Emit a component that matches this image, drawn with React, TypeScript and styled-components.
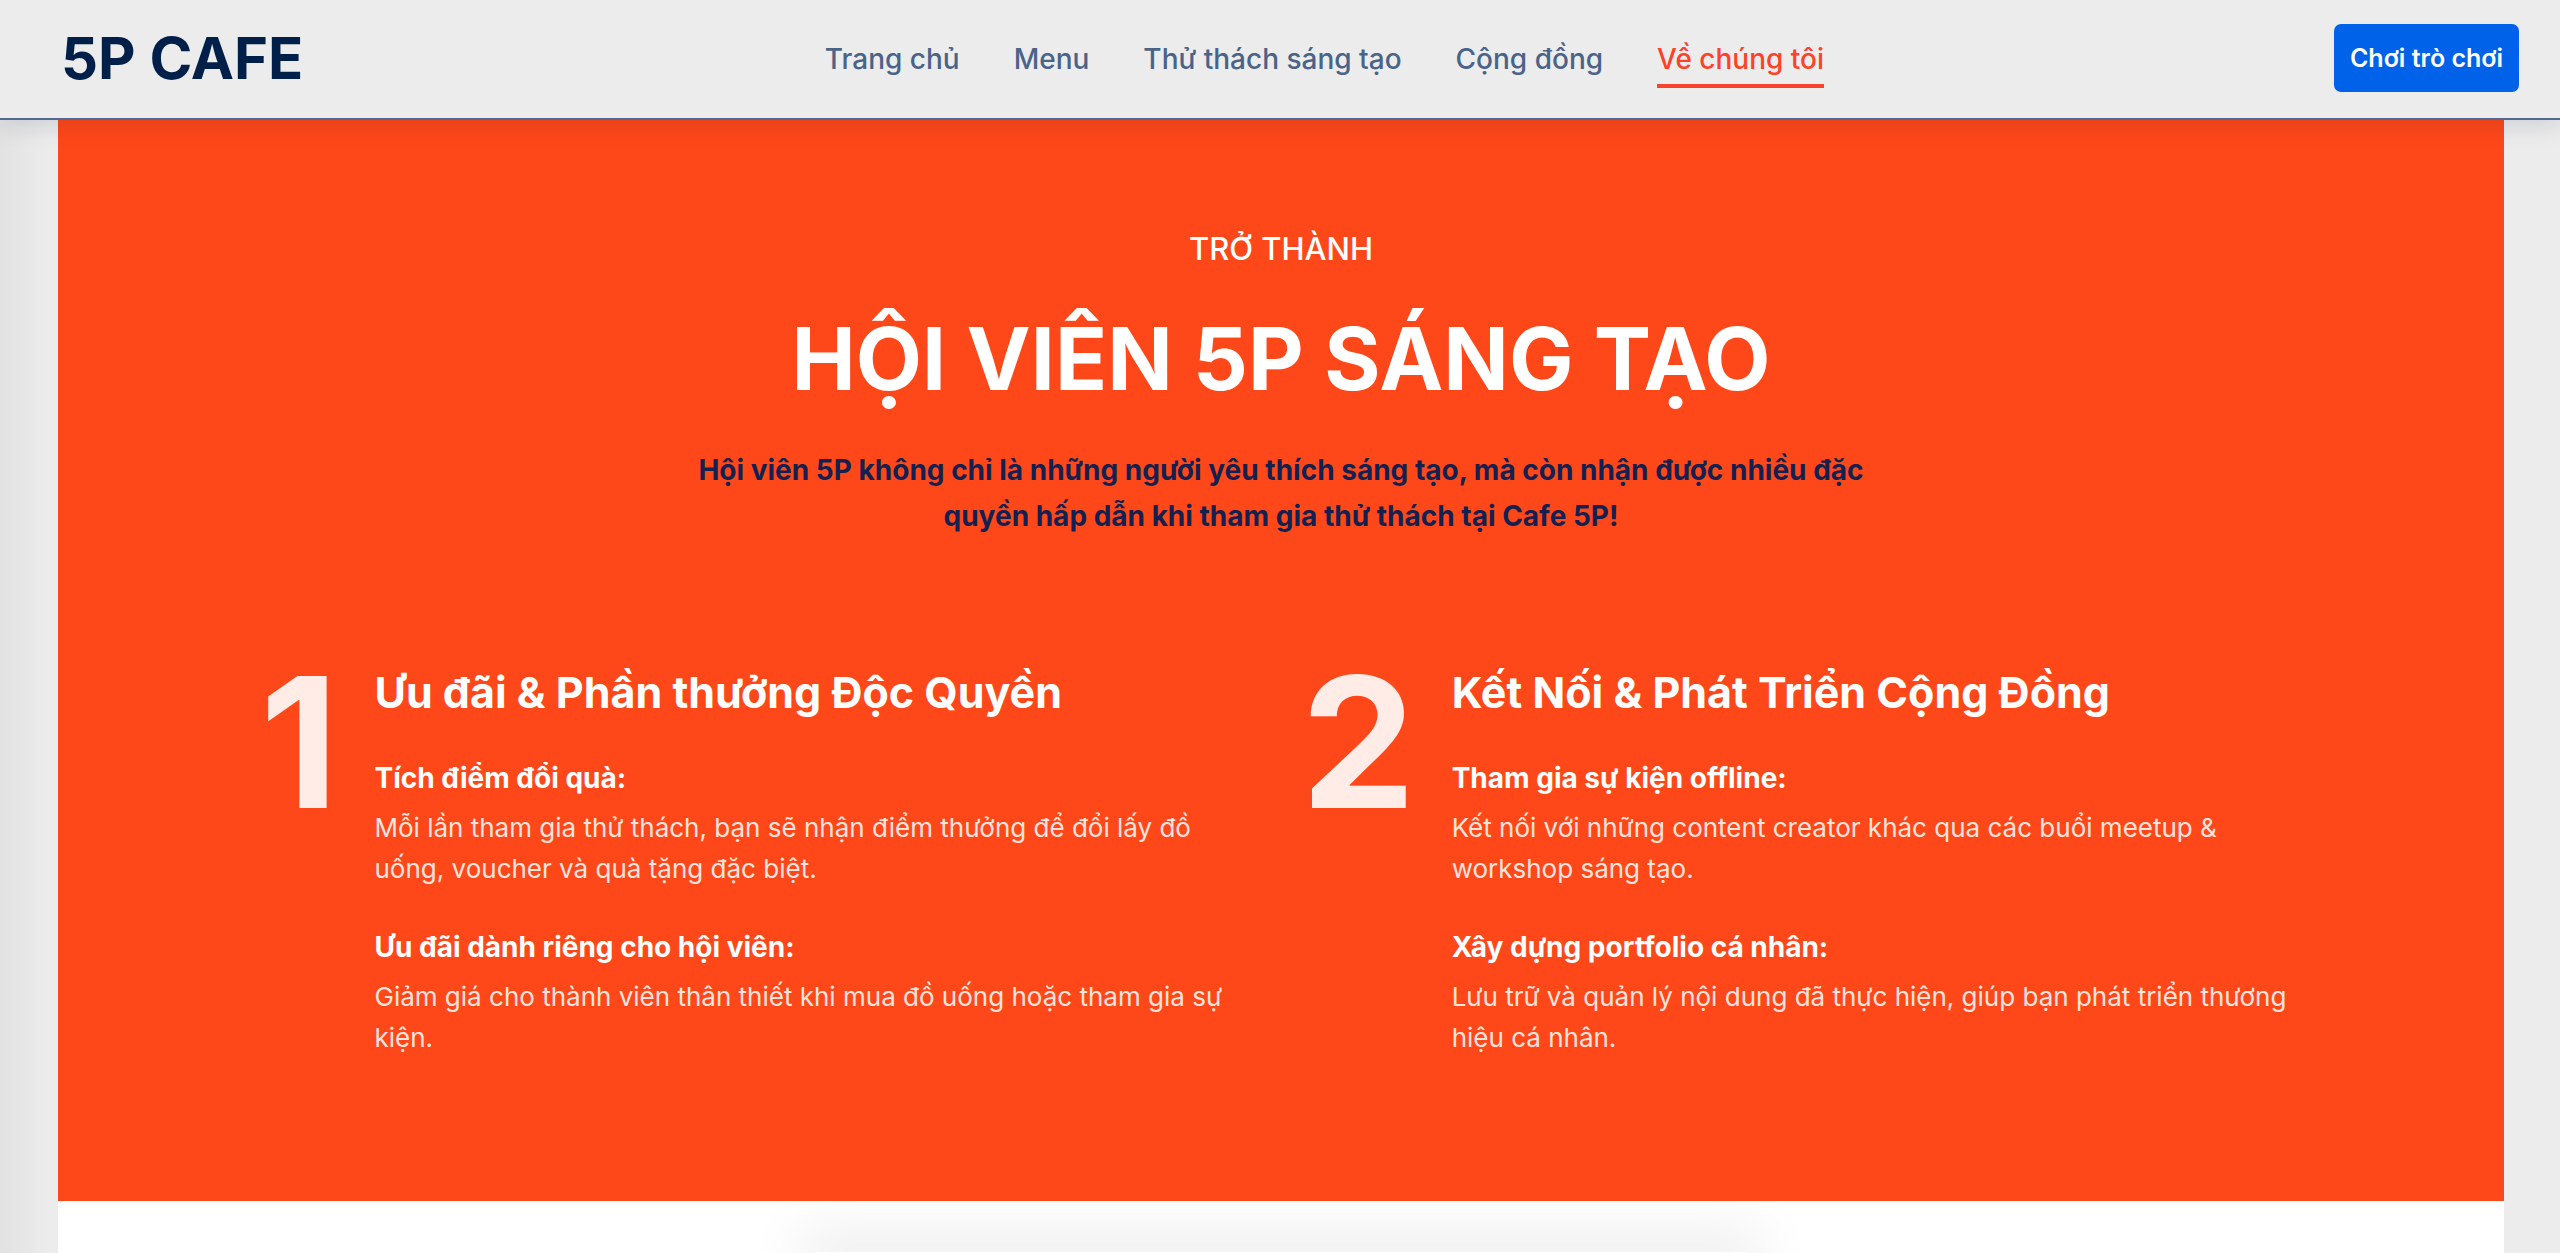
import React from "react";
import styled, { createGlobalStyle } from "styled-components";

const GlobalStyle = createGlobalStyle`
  *, *::before, *::after { box-sizing: border-box; }
  body {
    margin: 0;
    background: #ececec;
    font-family: Inter, "Noto Sans", "Liberation Sans", sans-serif;
  }
  h1, h2, h3, p { margin: 0; }
`;

const Page = styled.div`
  min-height: 100vh;
  display: flex;
  flex-direction: column;
  background: linear-gradient(to right, #e2e2e2, #ececec 48px);
`;

const Header = styled.header`
  position: sticky;
  top: 0;
  z-index: 10;
  display: flex;
  justify-content: space-between;
  align-items: center;
  height: 120px;
  padding: 0 41px 2px 61px;
  background: #ececec;
  border-bottom: 2px solid #53698f;
  box-shadow: 0 4px 24px rgba(0, 20, 60, 0.14);
`;

const Logo = styled.a`
  min-width: 254px;
  color: #00204a;
  font-size: 58px;
  font-weight: 700;
  line-height: 72px;
  text-decoration: none;
`;

const Nav = styled.nav`
  display: flex;
  gap: 54px;
`;

const NavLink = styled.a<{ $active?: boolean }>`
  padding: 12px 0 6px;
  border-bottom: 4px solid ${(p) => (p.$active ? "#f8432a" : "transparent")};
  color: ${(p) => (p.$active ? "#ff4127" : "#4a6388")};
  font-size: 28px;
  font-weight: 500;
  line-height: 38px;
  text-decoration: none;
  white-space: nowrap;
`;

const PlayButton = styled.button`
  height: 68px;
  padding: 0 16px;
  border: 0;
  border-radius: 7px;
  background: #0062e8;
  color: #fff;
  font-family: inherit;
  font-size: 25px;
  font-weight: 600;
  white-space: nowrap;
  cursor: pointer;
`;

const Main = styled.main`
  flex: 1;
  display: flex;
  flex-direction: column;
  margin: 0 56px 0 58px;
  background: #fff;
`;

const Membership = styled.section`
  padding: 105px 202px 143px;
  background: #ff4819;
  color: #fff;
`;

const Intro = styled.div`
  display: flex;
  flex-direction: column;
  align-items: center;
  text-align: center;
`;

const Eyebrow = styled.p`
  font-size: 31px;
  font-weight: 500;
  line-height: 48px;
`;

const Title = styled.h1`
  margin-top: 32px;
  font-size: 86px;
  font-weight: 700;
  line-height: 108px;
`;

const Lead = styled.p`
  max-width: 1220px;
  margin-top: 34px;
  color: #14204f;
  font-size: 28px;
  font-weight: 700;
  line-height: 46px;
`;

const Benefits = styled.div`
  display: grid;
  grid-template-columns: 1fr 1fr;
  gap: 40px;
  margin-top: 109px;
`;

const Benefit = styled.article`
  display: flex;
  align-items: flex-start;
  gap: 36px;
`;

const BenefitNumber = styled.span`
  color: #ffece7;
  font-size: 182px;
  font-weight: 700;
  line-height: 188px;
`;

const BenefitBody = styled.div`
  flex: 1;
  padding-top: 16px;
`;

const BenefitTitle = styled.h2`
  font-size: 43px;
  font-weight: 700;
  line-height: 56px;
`;

const Perk = styled.div`
  margin-top: 38px;
`;

const PerkTitle = styled.h3`
  font-size: 28px;
  font-weight: 700;
  line-height: 41px;
`;

const PerkText = styled.p`
  margin-top: 8px;
  color: #ffe4dd;
  font-size: 26px;
  line-height: 41px;
`;

const NextSection = styled.section`
  flex: 1;
  display: flex;
  flex-direction: column;
  align-items: center;
  padding-top: 51px;
  overflow: hidden;
`;

const Card = styled.div`
  flex: 1;
  width: 38%;
  box-shadow: 0 0 56px 16px rgba(0, 0, 0, 0.1);
`;

const links = ["Trang chủ", "Menu", "Thử thách sáng tạo", "Cộng đồng", "Về chúng tôi"];

const benefits = [
  {
    title: "Ưu đãi & Phần thưởng Độc Quyền",
    perks: [
      {
        title: "Tích điểm đổi quà:",
        text: "Mỗi lần tham gia thử thách, bạn sẽ nhận điểm thưởng để đổi lấy đồ uống, voucher và quà tặng đặc biệt.",
      },
      {
        title: "Ưu đãi dành riêng cho hội viên:",
        text: "Giảm giá cho thành viên thân thiết khi mua đồ uống hoặc tham gia sự kiện.",
      },
    ],
  },
  {
    title: "Kết Nối & Phát Triển Cộng Đồng",
    perks: [
      {
        title: "Tham gia sự kiện offline:",
        text: "Kết nối với những content creator khác qua các buổi meetup & workshop sáng tạo.",
      },
      {
        title: "Xây dựng portfolio cá nhân:",
        text: "Lưu trữ và quản lý nội dung đã thực hiện, giúp bạn phát triển thương hiệu cá nhân.",
      },
    ],
  },
];

export default function App() {
  return (
    <Page>
      <GlobalStyle />
      <Header>
        <Logo href="#">5P CAFE</Logo>
        <Nav>
          {links.map((label, i) => (
            <NavLink key={label} href="#" $active={i === links.length - 1}>
              {label}
            </NavLink>
          ))}
        </Nav>
        <PlayButton type="button">Chơi trò chơi</PlayButton>
      </Header>
      <Main>
        <Membership>
          <Intro>
            <Eyebrow>TRỞ THÀNH</Eyebrow>
            <Title>HỘI VIÊN 5P SÁNG TẠO</Title>
            <Lead>
              Hội viên 5P không chỉ là những người yêu thích sáng tạo, mà còn nhận được nhiều đặc
              quyền hấp dẫn khi tham gia thử thách tại Cafe 5P!
            </Lead>
          </Intro>
          <Benefits>
            {benefits.map((benefit, i) => (
              <Benefit key={benefit.title}>
                <BenefitNumber>{i + 1}</BenefitNumber>
                <BenefitBody>
                  <BenefitTitle>{benefit.title}</BenefitTitle>
                  {benefit.perks.map((perk) => (
                    <Perk key={perk.title}>
                      <PerkTitle>{perk.title}</PerkTitle>
                      <PerkText>{perk.text}</PerkText>
                    </Perk>
                  ))}
                </BenefitBody>
              </Benefit>
            ))}
          </Benefits>
        </Membership>
        <NextSection>
          <Card />
        </NextSection>
      </Main>
    </Page>
  );
}
